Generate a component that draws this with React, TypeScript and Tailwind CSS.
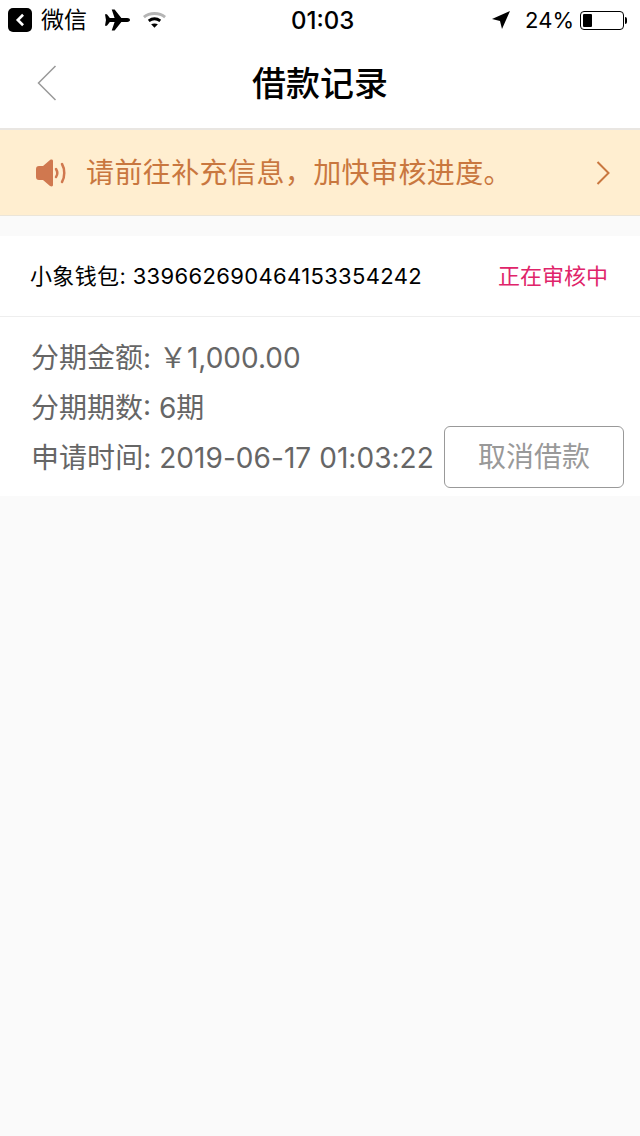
const font = "font-['Inter','Noto_Sans_CJK_SC',sans-serif]";

function StatusBar() {
    return (
        <div className="relative flex h-10 items-center justify-between bg-white leading-none text-black">
            <div className="flex items-center pl-2">
                <div className="flex h-6 w-6 items-center justify-center rounded-[5px] bg-black">
                    <svg viewBox="0 0 12 16" className="h-[14px] w-[12px]" fill="none" stroke="#fff" strokeWidth="3">
                        <path d="M9.5 2 3.5 8l6 6" />
                    </svg>
                </div>
                <span className="ml-[9px] text-[23px]">微信</span>
                <svg viewBox="0 0 26 22" className="ml-[18px] h-[22px] w-[25px]" fill="#000">
                    <path d="M0 5h2l3 4h5L7 0h3l7 9h6c2 0 3 1 3 2s-1 2-3 2h-6l-7 9H7l3-9H5l-3 4H0l1-6z" />
                </svg>
                <svg viewBox="0 0 26 18" className="ml-[12px] h-[18px] w-[25px]" fill="none">
                    <path d="M2 6c6-5 16-5 22 0" stroke="#b5b5b5" strokeWidth="3" />
                    <path d="M7 10c4-3 8-3 12 0" stroke="#000" strokeWidth="3" />
                    <path d="M9.500 13.500c2-1.300 5-1.300 7 0L13 17z" fill="#000" />
                </svg>
            </div>
            <span className="absolute left-[291px] top-[9px] text-[24px] font-medium">01:03</span>
            <div className="flex items-center pr-[13px]">
                <svg viewBox="0 0 18 18" className="h-[18px] w-[18px]" fill="#000">
                    <path d="M18 0 0 8l8 2 2 8z" />
                </svg>
                <span className="ml-[15px] text-[22px]">24%</span>
                <div className="ml-[6px] flex h-[19px] w-[44px] items-center rounded-[4px] border border-black p-[2px]">
                    <div className="h-full w-[9px] rounded-[1px] bg-black" />
                </div>
                <div className="ml-[1px] h-[7px] w-[2px] rounded-r-full bg-black" />
            </div>
        </div>
    );
}

export default function App() {
    return (
        <div className={`${font} flex min-h-[1136px] flex-col bg-[#fafafa]`}>
            <StatusBar />

            <header className="relative flex h-[90px] items-center justify-center border-b-2 border-[#e9e6e2] bg-white">
                <svg viewBox="0 0 20 36" className="absolute left-[37px] top-[25px] h-[36px] w-[20px]" fill="none" stroke="#999999" strokeWidth="1.500">
                    <path d="M18.500 1 1.500 18l17 17" />
                </svg>
                <h1 className="text-[34px] font-medium leading-none text-black">借款记录</h1>
            </header>

            <div className="flex h-[86px] items-center border-b border-[#ebe5d9] bg-[#ffeed0] pl-[36px] pr-[30px]">
                <svg viewBox="0 0 32 28" className="h-[28px] w-[32px]" fill="#d0784f">
                    <path d="M0 10c0-2 1-3 3-3h4l7-6c2-1 3 0 3 1v24c0 1-1 2-3 1l-7-6H3c-2 0-3-1-3-3z" />
                    <path d="M20 10c1.500 2.500 1.500 6 0 8M26 5c3 5 3 13 0 18" fill="none" stroke="#d0784f" strokeWidth="2.500" strokeLinecap="round" />
                </svg>
                <span className="ml-[18px] flex-1 text-[28px] leading-none tracking-[0.4px] text-[#c9773f]">{"请前往补充信息\uFF0C加快审核进度。"}</span>
                <svg viewBox="0 0 14 24" className="h-[24px] w-[14px]" fill="none" stroke="#c9773f" strokeWidth="2">
                    <path d="M1.500 1 12.500 12l-11 11" />
                </svg>
            </div>

            <section className="mt-5 bg-white">
                <div className="flex h-[81px] items-center justify-between border-b border-[#eeeeee] pl-[30px] pr-[32px]">
                    <span className="text-[22px] leading-none tracking-[0.35px] text-black">小象钱包: 339662690464153354242</span>
                    <span className="text-[22px] leading-none text-[#e0246a]">正在审核中</span>
                </div>
                <div className="flex h-[179px] flex-col pl-[31px] pt-[16px] text-[28px] leading-[50px] text-[#666666]">
                    <div>{"分期金额: \uFFE51,000.00"}</div>
                    <div>分期期数: 6期</div>
                    <div className="flex items-center">
                        <span className="tracking-[0.05px]">申请时间: 2019-06-17 01:03:22</span>
                        <button className="-mb-[5px] -mt-[7px] ml-[10px] flex h-[62px] w-[180px] items-center justify-center rounded-[6px] border border-[#999999] text-[28px] leading-none text-[#999999]">
                            取消借款
                        </button>
                    </div>
                </div>
            </section>
        </div>
    );
}
